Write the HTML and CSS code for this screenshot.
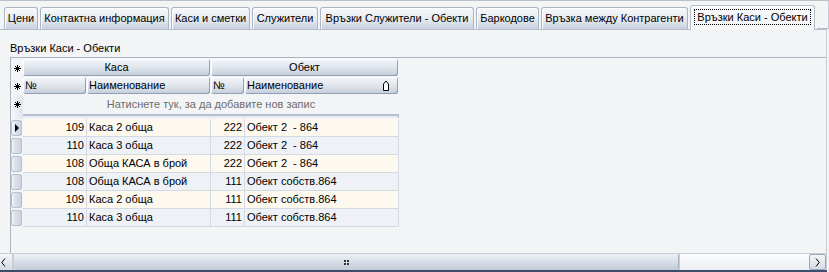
FILE: index.html
```html
<!DOCTYPE html>
<html lang="bg">
<head>
    <meta charset="UTF-8">
    <title>Връзки Каси - Обекти</title>
    <link rel="stylesheet" href="styles.css">
</head>
<body>
    <div class="window">
        <div class="tabs">
            <span class="tab w-ceni">Цени</span>
            <span class="tab w-kontakt">Контактна информация</span>
            <span class="tab w-kasi">Каси и сметки</span>
            <span class="tab w-sluj">Служители</span>
            <span class="tab w-vsluj">Връзки Служители - Обекти</span>
            <span class="tab w-bar">Баркодове</span>
            <span class="tab w-kontr">Връзка между Контрагенти</span>
            <span class="tab active w-active"><span class="focus">Връзки Каси - Обекти</span></span>
            <span class="tab-rest"></span>
        </div>

        <div class="panel">
            <div class="caption">Връзки Каси - Обекти</div>

            <div class="grid">
                <!-- band headers -->
                <div class="row band-row">
                    <div class="ind"><svg class="star" viewBox="0 0 7 7"><path d="M3.5 0V7M0 3.5H7M1 1L6 6M6 1L1 6" stroke="#000" stroke-width="1"/></svg></div>
                    <div class="hcell center">Каса</div>
                    <div class="hcell center">Обект</div>
                </div>
                <!-- column headers -->
                <div class="row col-row">
                    <div class="ind"><svg class="star" viewBox="0 0 7 7"><path d="M3.5 0V7M0 3.5H7M1 1L6 6M6 1L1 6" stroke="#000" stroke-width="1"/></svg></div>
                    <div class="hcell">№</div>
                    <div class="hcell">Наименование</div>
                    <div class="hcell">№</div>
                    <div class="hcell sort">Наименование
                        <svg class="sort-icon" viewBox="0 0 8 11"><path d="M1.5 10.5V4L4 1L6.5 4V10.5Z" fill="#fff" stroke="#000" stroke-width="1"/></svg>
                    </div>
                </div>
                <!-- new item row -->
                <div class="row new-row">
                    <div class="ind tall"><svg class="star" viewBox="0 0 7 7"><path d="M3.5 0V7M0 3.5H7M1 1L6 6M6 1L1 6" stroke="#000" stroke-width="1"/></svg></div>
                    <div class="new-text">Натиснете тук, за да добавите нов запис</div>
                </div>
                <div class="row sep-row">
                    <div class="ind sep-ind"></div>
                    <div class="sep-line"></div>
                </div>

                <div class="row data odd">
                    <div class="ind"><span class="ind-btn"><span class="current"></span></span></div>
                    <div class="cell num">109</div>
                    <div class="cell">Каса 2 обща</div>
                    <div class="cell num">222</div>
                    <div class="cell">Обект 2&nbsp; - 864</div>
                </div>
                <div class="row data even">
                    <div class="ind"><span class="ind-btn"></span></div>
                    <div class="cell num">110</div>
                    <div class="cell">Каса 3 обща</div>
                    <div class="cell num">222</div>
                    <div class="cell">Обект 2&nbsp; - 864</div>
                </div>
                <div class="row data odd">
                    <div class="ind"><span class="ind-btn"></span></div>
                    <div class="cell num">108</div>
                    <div class="cell">Обща КАСА в брой</div>
                    <div class="cell num">222</div>
                    <div class="cell">Обект 2&nbsp; - 864</div>
                </div>
                <div class="row data even">
                    <div class="ind"><span class="ind-btn"></span></div>
                    <div class="cell num">108</div>
                    <div class="cell">Обща КАСА в брой</div>
                    <div class="cell num">111</div>
                    <div class="cell">Обект собств.864</div>
                </div>
                <div class="row data odd">
                    <div class="ind"><span class="ind-btn"></span></div>
                    <div class="cell num">109</div>
                    <div class="cell">Каса 2 обща</div>
                    <div class="cell num">111</div>
                    <div class="cell">Обект собств.864</div>
                </div>
                <div class="row data even">
                    <div class="ind"><span class="ind-btn"></span></div>
                    <div class="cell num">110</div>
                    <div class="cell">Каса 3 обща</div>
                    <div class="cell num">111</div>
                    <div class="cell">Обект собств.864</div>
                </div>
            </div>

            <div class="hscroll">
                <div class="sb-btn left"><svg viewBox="0 0 5 9"><path d="M4 0.5L0.8 4.5L4 8.5" fill="none" stroke="#000" stroke-width="1"/></svg></div>
                <div class="sb-thumb"><span class="grip"></span></div>
                <div class="sb-track"></div>
                <div class="sb-btn right"><svg viewBox="0 0 5 9"><path d="M1 0.5L4.2 4.5L1 8.5" fill="none" stroke="#000" stroke-width="1"/></svg></div>
            </div>
        </div>
        <div class="bottom-line"></div>
    </div>
</body>
</html>
```

FILE: styles.css
```css
body {
    margin: 0;
    padding: 0;
    background-color: #f3f4f6;
    font-family: "Liberation Sans", Arial, sans-serif;
    font-size: 11px;
    color: #000000;
}
.window {
    width: 829px;
    height: 272px;
    display: flex;
    flex-direction: column;
    border-top: 1px solid #b9c0ca;
    box-sizing: border-box;
    background-color: #f3f4f6;
}

/* tabs */
.tabs {
    display: flex;
    align-items: flex-end;
    height: 28px;
    padding-left: 4px;
    gap: 2px;
}
.tab {
    height: 22px;
    box-sizing: border-box;
    line-height: 20px;
    text-align: center;
    border: 1px solid #a9b5c5;
    border-bottom: none;
    border-radius: 3px 3px 0 0;
    background: linear-gradient(#f7f8fa, #e6eaf0 55%, #c7d0dc);
    box-shadow: inset 1px 1px 0 #ffffff;
    white-space: nowrap;
}
.w-ceni { width: 34px; }
.w-kontakt { width: 129px; }
.w-kasi { width: 79px; }
.w-sluj { width: 66px; }
.w-vsluj { width: 154px; }
.w-bar { width: 63px; }
.w-kontr { width: 147px; }
.w-active { width: 125px; }
.tab.active {
    height: 25px;
    margin-bottom: -1px;
    background: #f6f7f9;
    border-color: #b4bdc9;
    position: relative;
    z-index: 1;
    padding: 3px 3px 0 3px;
    line-height: 14px;
}
.focus {
    display: block;
    border: 1px dotted #000000;
    line-height: 14px;
}
.tab-rest {
    flex: 1;
    align-self: stretch;
    border-bottom: 1px solid #b4bdc9;
    border-right: 1px solid #c9ced6;
}

/* panel */
.panel {
    flex: 1;
    display: flex;
    flex-direction: column;
    border-top: 1px solid #b4bdc9;
    border-right: 1px solid #c9ced6;
    margin-right: 2px;
}
.caption {
    height: 27px;
    padding-left: 10px;
    line-height: 14px;
    padding-top: 11px;
    box-sizing: border-box;
}
.grid {
    flex: 1;
    margin-left: 10px;
    border-left: 1px solid #a9b5c5;
    border-top: 1px solid #a9b5c5;
    display: flex;
    flex-direction: column;
}
.row {
    display: grid;
    grid-template-columns: 12px 64px 124px 34px 154px;
}
.band-row {
    grid-template-columns: 12px 188px 188px;
    height: 19px;
    padding-top: 1px;
    box-sizing: border-box;
}
.col-row {
    height: 18px;
}
.ind {
    display: flex;
    align-items: center;
    justify-content: center;
}
.star {
    width: 7px;
    height: 7px;
}
.hcell {
    margin: 0 1px 1px 0;
    border-radius: 3px;
    background: linear-gradient(#f3f5f8, #e3e8ee 45%, #c3ccd9);
    box-shadow: inset -1px -1px 0 #8fa0b8, inset 1px 1px 0 #ffffff;
    line-height: 17px;
    padding-left: 2px;
    white-space: nowrap;
    position: relative;
}
.hcell.center {
    text-align: center;
    padding-left: 0;
}
.sort-icon {
    position: absolute;
    right: 8px;
    top: 3px;
    width: 8px;
    height: 11px;
}
.new-row {
    grid-template-columns: 12px 376px;
    height: 18px;
}
.ind.tall {
    align-items: flex-start;
    padding-top: 6px;
    height: 24px;
    box-sizing: border-box;
    border-radius: 3px;
    background: linear-gradient(90deg, #f7f8fa, #dfe4eb);
}
.new-text {
    color: #6d6d6d;
    text-align: center;
    line-height: 18px;
}
.sep-row {
    grid-template-columns: 12px 376px;
    height: 6px;
}
.sep-ind {
    background: none;
}
.sep-line {
    margin-top: 1px;
    height: 2px;
    border-top: 2px solid #b3bfce;
    border-right: 1px solid #b3bfce;
    background: #e8ecf1;
}
.data {
    height: 18px;
}
.data .cell {
    border-right: 1px solid #d3dae4;
    border-bottom: 1px solid #d3dae4;
    line-height: 17px;
    padding: 0 2px;
    white-space: nowrap;
}
.data .cell.num {
    text-align: right;
}
.odd .cell {
    background-color: #fdf9ef;
}
.even .cell {
    background-color: #eef1f5;
}
.data .ind {
    padding: 1px 1px 1px 0;
    box-sizing: border-box;
}
.ind-btn {
    display: block;
    width: 100%;
    height: 100%;
    border-radius: 3px;
    background: linear-gradient(90deg, #ffffff, #dde2e9 35%, #c9d1dc);
    box-shadow: inset 0 0 0 1px #b7c1cf;
    position: relative;
}
.current {
    position: absolute;
    left: 4px;
    top: 4px;
    width: 0;
    height: 0;
    border-top: 4px solid transparent;
    border-bottom: 4px solid transparent;
    border-left: 4px solid #000000;
}

/* horizontal scrollbar */
.hscroll {
    height: 17px;
    display: flex;
    border-top: 1px solid #c6cdd7;
    box-sizing: border-box;
    margin-left: -0px;
}
.sb-btn {
    width: 11px;
    display: flex;
    align-items: center;
    justify-content: flex-start;
    background: linear-gradient(#f4f6f8, #d5dbe4);
}
.sb-btn svg {
    width: 5px;
    height: 9px;
}
.sb-btn.left {
    border-right: 2px solid #c6cdd7;
    padding-left: 1px;
}
.sb-btn.right {
    width: 15px;
    justify-content: center;
    border: 1px solid #9aa8bb;
    border-radius: 2px;
}
.sb-thumb {
    width: 664px;
    border-radius: 2px;
    background: linear-gradient(#eef1f5, #d8dee7 50%, #c0c9d6);
    border-right: 1px solid #a5b1c2;
    display: flex;
    align-items: center;
    justify-content: center;
}
.grip {
    width: 5px;
    height: 5px;
    background:
        linear-gradient(#000, #000) 0 0 / 2px 2px no-repeat,
        linear-gradient(#000, #000) 3px 0 / 2px 2px no-repeat,
        linear-gradient(#000, #000) 0 3px / 2px 2px no-repeat,
        linear-gradient(#000, #000) 3px 3px / 2px 2px no-repeat;
    opacity: 0.75;
}
.sb-track {
    flex: 1;
    background: linear-gradient(#fbfcfd, #eceff3);
    border-left: 1px solid #c6cdd7;
}
.bottom-line {
    height: 2px;
    background-color: #3c4d6a;
    margin-right: 2px;
}
```
